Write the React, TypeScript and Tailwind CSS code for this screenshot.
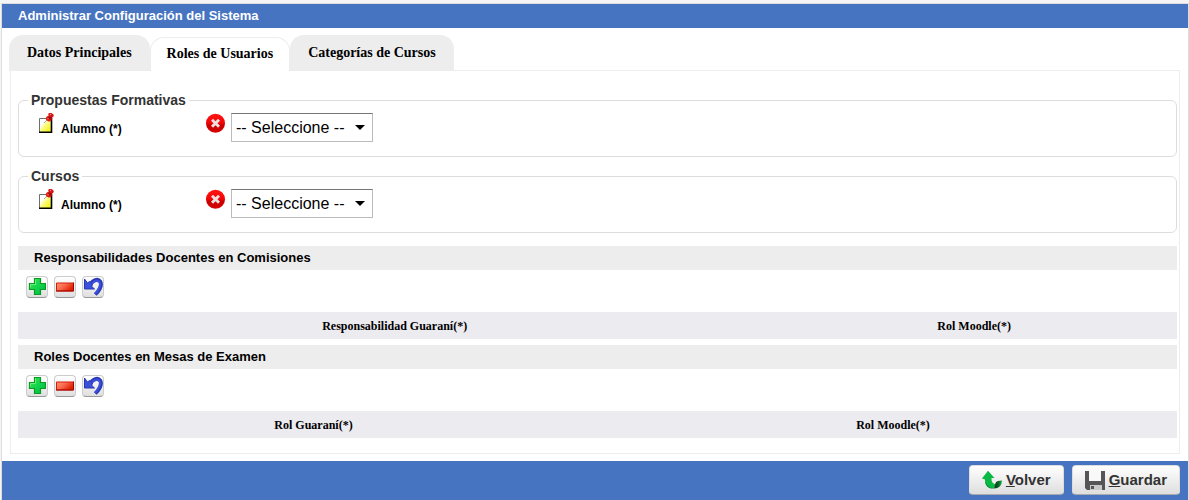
import React, { useState } from "react";

function NoteIcon() {
  return (
    <svg width="16" height="20" viewBox="0 0 16 20" aria-hidden="true">
      <defs>
        <linearGradient id="note" x1="0" y1="0" x2="1" y2="1">
          <stop offset="0.3" stopColor="#fff" />
          <stop offset="0.5" stopColor="#fbfb7c" />
          <stop offset="0.9" stopColor="#f2f215" />
        </linearGradient>
      </defs>
      <path d="M.5 5.500h12v14h-12z" fill="url(#note)" stroke="#6f6f6f" />
      <path d="M12.500 5v14.200H0" fill="none" stroke="#000" strokeWidth="1.600" />
      <path d="M5 10 8 7" stroke="#aaa" />
      <ellipse cx="9.800" cy="5.800" rx="3" ry="2.500" transform="rotate(30 9.800 5.800)" fill="#e01a14" />
      <path d="m8.800 5 2-4 3.200 2-2 4.500z" fill="#a80c0c" />
      <ellipse cx="12" cy="2" rx="2.800" ry="2" transform="rotate(25 12 2)" fill="#d91515" />
      <circle cx="11.500" cy="1.500" r="0.700" fill="#ff8b7b" />
      <circle cx="9" cy="5.500" r="0.700" fill="#ff7b6b" />
    </svg>
  );
}

function ClearIcon() {
  return (
    <svg width="20" height="20" viewBox="0 0 20 20" aria-hidden="true">
      <defs>
        <linearGradient id="clear" x1="0" y1="0" x2="0" y2="1">
          <stop offset="0" stopColor="#ff1414" />
          <stop offset="0.500" stopColor="#f20505" />
          <stop offset="0.600" stopColor="#c90000" />
          <stop offset="1" stopColor="#d60000" />
        </linearGradient>
      </defs>
      <circle cx="9.500" cy="10.200" r="9.500" fill="url(#clear)" />
      <path d="m6 6.700 7 7m0-7-7 7" stroke="#eedede" strokeWidth="2.900" />
    </svg>
  );
}

function PlusIcon() {
  return (
    <svg width="18" height="18" viewBox="0 0 18 18" aria-hidden="true">
      <defs>
        <linearGradient id="plus" x1="0" y1="0" x2="1" y2="1">
          <stop offset="0" stopColor="#3fe83f" />
          <stop offset="0.500" stopColor="#12d44e" />
          <stop offset="1" stopColor="#00b83c" />
        </linearGradient>
      </defs>
      <path d="M6.500 .5h6v5h5v6h-5v5h-6v-5h-5v-6h5z" fill="url(#plus)" stroke="#0c9a26" strokeWidth="1.200" />
      <path d="M7.500 1.500v5h-5v3" fill="none" stroke="#7df38a" strokeWidth="0.800" />
    </svg>
  );
}

function MinusIcon() {
  return (
    <svg width="18" height="18" viewBox="0 0 18 18" aria-hidden="true">
      <defs>
        <linearGradient id="minus" x1="0" y1="0" x2="1" y2="0.500">
          <stop offset="0" stopColor="#ff9a72" />
          <stop offset="0.500" stopColor="#f8694c" />
          <stop offset="1" stopColor="#e02000" />
        </linearGradient>
      </defs>
      <path d="M.5 5h17v8H.5z" fill="url(#minus)" stroke="#d51c0d" />
      <path d="M0 13h17.500V4.500" fill="none" stroke="#9d0700" />
    </svg>
  );
}

function UndoIcon() {
  return (
    <svg width="20" height="20" viewBox="0 0 20 20" className="shrink-0" aria-hidden="true">
      <path d="M7 8C9.500 2.800 15 1 17.300 4.500c2 4-.5 8.500-5 13" fill="none" stroke="#2b39b4" strokeWidth="3.800" />
      <path d="M7.500 8C10 4 14.500 2.500 16.500 5c2 3.700-1 8-4.500 12" fill="none" stroke="#3b51dc" strokeWidth="2.400" />
      <path d="M1.500 2v10h10L8.800 9.500 9.300 7 6.500 4.500 4.500 6z" fill="#3b51dc" stroke="#2b39b4" />
    </svg>
  );
}

function BackIcon() {
  return (
    <svg width="20" height="20" viewBox="0 0 20 20" aria-hidden="true">
      <defs>
        <linearGradient id="back" x1="0" y1="0" x2="1" y2="0">
          <stop offset="0" stopColor="#12331e" />
          <stop offset="0.500" stopColor="#0c5a26" />
          <stop offset="1" stopColor="#10b345" />
        </linearGradient>
      </defs>
      <path d="M6 .8 12.500 8H9.500c-.3 3.500 1 5.500 4 6.500L12 18.500C6 18.500 3 15 3 9.500L0 8.500z" fill="#08b944" />
      <path d="M3 10c1 5 3.500 7.500 9 8.500-6 .5-9-3-9-8.500z" fill="#00842b" />
      <path d="M20 10.500c-.3 5.200-3 8-8 8l1.500-5.500c1-1.800 3.500-2.500 6.500-2.500z" fill="url(#back)" />
    </svg>
  );
}

function SaveIcon() {
  return (
    <svg width="20" height="20" viewBox="0 0 20 20" aria-hidden="true">
      <path d="M0 1h20v19H2l-2-2z" fill="#565656" />
      <path d="M4 0h12v11H4z" fill="#f8f8f8" />
      <path d="M5 15h12v5H5z" fill="#c9c9c9" />
      <path d="M6 16h3v3H6z" fill="#565656" />
    </svg>
  );
}

const tabs = ["Datos Principales", "Roles de Usuarios", "Categorías de Cursos"];

function Tab({ label, active, onSelect }: { label: string; active: boolean; onSelect: () => void }) {
  return (
    <button
      type="button"
      role="tab"
      aria-selected={active}
      onClick={onSelect}
      className={
        active
          ? "h-[34px] rounded-t-[14px] border border-b-0 border-[#ededed] bg-white px-4 pb-[2px] font-['Liberation_Serif',serif] text-sm font-bold text-black"
          : "h-9 rounded-t-[14px] bg-[#ededed] px-[18px] font-['Liberation_Serif',serif] text-sm font-bold text-black"
      }
    >
      {label}
    </button>
  );
}

function RoleField({ legend, id }: { legend: string; id: string }) {
  return (
    <fieldset className="mb-[10px] rounded-md border border-[#ddd] pr-4 pb-[14px] pl-5">
      <legend className="-ml-[11px] px-[3px] text-sm leading-[18px] font-bold text-[#333]">{legend}</legend>
      <div className="flex items-start pt-1">
        <NoteIcon />
        <label htmlFor={id} className="w-[151px] pt-2 pl-[6px] text-xs leading-4 font-bold text-black">
          Alumno (*)
        </label>
        <button type="button" aria-label="Limpiar" className="mr-[5px]">
          <ClearIcon />
        </button>
        <div className="relative">
          <select
            id={id}
            className="h-[29px] w-[142px] appearance-none border border-[#bbb] border-t-[#767676] bg-white px-1 text-base leading-5 text-black"
          >
            <option>-- Seleccione --</option>
          </select>
          <svg className="pointer-events-none absolute top-3 right-2" width="10" height="5" viewBox="0 0 10 5" aria-hidden="true">
            <path d="M0 0h10L5 5z" fill="#000" />
          </svg>
        </div>
      </div>
    </fieldset>
  );
}

const toolButton =
  "flex size-[22px] items-center justify-center overflow-hidden rounded-[4px] border border-[#ccc] border-b-[#999] bg-linear-to-b from-white to-[#dfdfdf]";

function RoleTable({ title, first, split }: { title: string; first: string; split: string }) {
  return (
    <section className="mb-[6px]">
      <h2 className="bg-[#ededed] pl-4 text-[13px] leading-6 font-bold text-black">{title}</h2>
      <div className="flex gap-[6px] px-2 pt-[6px] pb-[14px]">
        <button type="button" aria-label="Agregar" className={toolButton}>
          <PlusIcon />
        </button>
        <button type="button" aria-label="Quitar" className={toolButton}>
          <MinusIcon />
        </button>
        <button type="button" aria-label="Deshacer" className={toolButton}>
          <UndoIcon />
        </button>
      </div>
      <table className="w-full table-fixed bg-[#ecebf0] font-['Liberation_Serif',serif] text-xs leading-4 text-black">
        <thead>
          <tr className="h-[27px]">
            <th className={split}>{first}</th>
            <th>Rol Moodle(*)</th>
          </tr>
        </thead>
      </table>
    </section>
  );
}

const footerButton =
  "flex h-[30px] items-center gap-1 rounded-[4px] border border-[#ddd] border-b-[#aaa] bg-linear-to-b from-white to-[#dedede] px-3 text-[15px] font-bold text-[#333]";

export default function App() {
  const [current, setCurrent] = useState(1);
  return (
    <div className="bg-[#f5f5f5] pt-[3px] pl-px font-['Liberation_Sans',sans-serif]">
      <main className="border border-b-0 border-[#ddd] bg-white">
        <h1 className="bg-[#4674c1] pl-4 text-[13px] leading-6 font-bold text-white">
          Administrar Configuración del Sistema
        </h1>
        <div role="tablist" className="mr-2 flex items-end pt-[7px] pl-[7px]">
          {tabs.map((label, i) => (
            <Tab key={label} label={label} active={i === current} onSelect={() => setCurrent(i)} />
          ))}
          <div className="flex-1 border-b border-[#ededed]" />
        </div>
        <div role="tabpanel" className="mx-2 mb-[7px] border border-t-0 border-[#ededed] pt-5 pr-[2px] pb-[9px] pl-[7px]">
          <RoleField legend="Propuestas Formativas" id="alumno-propuestas" />
          <RoleField legend="Cursos" id="alumno-cursos" />
          <div className="pt-[3px]">
            <RoleTable title="Responsabilidades Docentes en Comisiones" first="Responsabilidad Guaraní(*)" split="w-[65%]" />
            <RoleTable title="Roles Docentes en Mesas de Examen" first="Rol Guaraní(*)" split="w-[51%]" />
          </div>
        </div>
        <footer className="flex justify-end gap-2 bg-[#4674c1] pt-1 pr-2 pb-[5px]">
          <button type="button" className={footerButton}>
            <BackIcon />
            <span><u>V</u>olver</span>
          </button>
          <button type="button" className={footerButton}>
            <SaveIcon />
            <span><u>G</u>uardar</span>
          </button>
        </footer>
      </main>
    </div>
  );
}
